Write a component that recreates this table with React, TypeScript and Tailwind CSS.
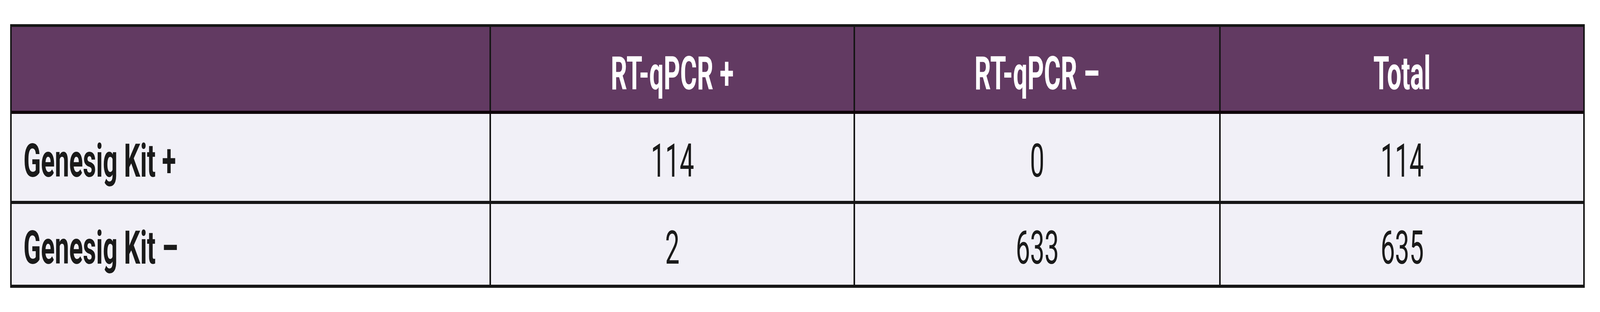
const header = ["", "RT-qPCR +", "RT-qPCR –", "Total"];

const rows = [
  { label: "Genesig Kit +", values: ["114", "0", "114"], h: "h-[223px]", pt: "pt-[62px]" },
  { label: "Genesig Kit –", values: ["2", "633", "635"], h: "h-[215px]", pt: "pt-[54px]" },
];

// column widths follow the reference proportions; the table stretches with the window
const cols = "grid grid-cols-[2200fr_1678fr_1683fr_1677fr]";

// the reference table is set in a tall, narrow face
function Narrow({ children, left }: { children: React.ReactNode; left?: boolean }) {
  return (
    <span className={`inline-block whitespace-nowrap scale-x-[0.556] ${left ? "origin-left" : "origin-center"}`}>
      {children}
    </span>
  );
}

export default function App() {
  return (
    <div className="min-h-[800px] bg-white pt-[62px] pl-[0.625vw] font-['Roboto',sans-serif] text-[118px] leading-none">
      <div className="w-[98.43vw] border-t-[7px] border-b-[8px] border-x-4 border-[#161616]">
        <div className={`${cols} h-[223px] border-b-[8px] border-[#0f0309] bg-[#623a62] text-white font-bold`}>
          {header.map((h, i) => (
            <div
              key={i}
              className={`pt-[61px] text-center ${i > 0 ? "border-l-4 border-[#161616]" : ""}`}
            >
              {h && <Narrow>{h}</Narrow>}
            </div>
          ))}
        </div>
        {rows.map((r, ri) => (
          <div
            key={r.label}
            className={`${cols} ${r.h} bg-[#f1f0f7] text-[#1a1a1a] ${ri > 0 ? "border-t-[8px] border-[#161616]" : ""}`}
          >
            <div className={`${r.pt} pl-[0.75vw] font-bold`}>
              <Narrow left>{r.label}</Narrow>
            </div>
            {r.values.map((v, i) => (
              <div key={i} className={`${r.pt} text-center border-l-4 border-[#161616]`}>
                <Narrow>{v}</Narrow>
              </div>
            ))}
          </div>
        ))}
      </div>
    </div>
  );
}
